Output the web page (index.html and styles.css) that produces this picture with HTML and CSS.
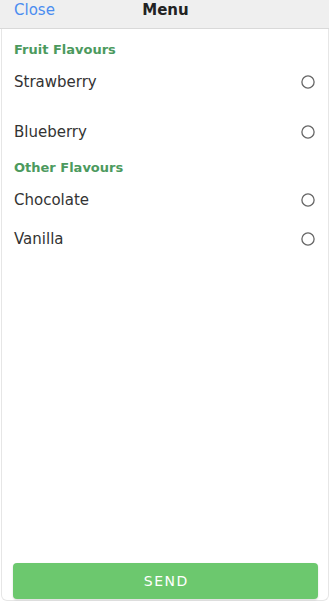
FILE: index.html
```html
<!DOCTYPE html>
<html lang="en">
<head>
<meta charset="utf-8">
<title>Menu</title>
<link rel="stylesheet" href="styles.css">
</head>
<body>
<div class="app">
  <header class="topbar">
    <a class="topbar__close">Close</a>
    <div class="topbar__title">Menu</div>
    <div class="topbar__spacer"></div>
  </header>
  <main class="list">
    <section class="group">
      <h2 class="group__title">Fruit Flavours</h2>
      <label class="row row--tall">
        <span class="row__label">Strawberry</span>
        <svg class="radio" viewBox="0 0 14 14" width="14" height="14"><circle cx="7" cy="7" r="6.1" fill="none" stroke="#666" stroke-width="1.3"/></svg>
      </label>
      <label class="row">
        <span class="row__label">Blueberry</span>
        <svg class="radio" viewBox="0 0 14 14" width="14" height="14"><circle cx="7" cy="7" r="6.1" fill="none" stroke="#666" stroke-width="1.3"/></svg>
      </label>
    </section>
    <section class="group">
      <h2 class="group__title">Other Flavours</h2>
      <label class="row">
        <span class="row__label">Chocolate</span>
        <svg class="radio" viewBox="0 0 14 14" width="14" height="14"><circle cx="7" cy="7" r="6.1" fill="none" stroke="#666" stroke-width="1.3"/></svg>
      </label>
      <label class="row">
        <span class="row__label">Vanilla</span>
        <svg class="radio" viewBox="0 0 14 14" width="14" height="14"><circle cx="7" cy="7" r="6.1" fill="none" stroke="#666" stroke-width="1.3"/></svg>
      </label>
    </section>
  </main>
  <footer class="footer">
    <button class="send">SEND</button>
  </footer>
</div>
</body>
</html>
```
FILE: styles.css
```css
* { box-sizing: border-box; }
html, body { margin: 0; padding: 0; background: #fff; }
body {
  font-family: "DejaVu Sans", Verdana, sans-serif;
  color: #333;
  width: 330px;
  height: 601px;
  overflow: hidden;
}
.app {
  display: flex;
  flex-direction: column;
  height: 601px;
  margin-left: 1px;
  width: 328px;
  border: 1px solid #e6e6e6;
  border-top: none;
  border-radius: 0 0 6px 6px;
}
.topbar {
  display: grid;
  grid-template-columns: 1fr auto 1fr;
  align-items: start;
  height: 29px;
  margin: 0 -1px 0 -2px;
  padding: 1px 12px 0 14px;
  background: #efefef;
  border-bottom: 1px solid #d9d9d9;
  font-size: 15px;
  line-height: 18px;
}
.topbar__close { color: #4a8cf0; justify-self: start; }
.topbar__title { font-weight: bold; color: #222; }
.list {
  flex: 1;
  padding: 4px 13.5px 0 12px;
}
.group__title {
  margin: 0;
  padding: 9px 0 4px;
  font-size: 13px;
  line-height: 16px;
  font-weight: bold;
  color: #4c9a5e;
}
.row {
  display: flex;
  align-items: center;
  justify-content: space-between;
  height: 39px;
  font-size: 15px;
  line-height: 20px;
}
.row--tall {
  height: 50px;
  align-items: flex-start;
  padding-top: 9.5px;
}
.row--tall .radio { margin-top: 3px; }
.radio { display: block; }
.footer {
  padding: 0 10px 1px 11px;
}
.send {
  display: block;
  width: 100%;
  height: 36px;
  border: none;
  border-radius: 4px;
  background: #6cc86e;
  color: #fff;
  font-family: "DejaVu Sans", Verdana, sans-serif;
  font-size: 14px;
  letter-spacing: 1.5px;
  padding: 0 0 0 1.5px;
  box-shadow: 0 1px 2px rgba(0,0,0,0.15);
}
```
